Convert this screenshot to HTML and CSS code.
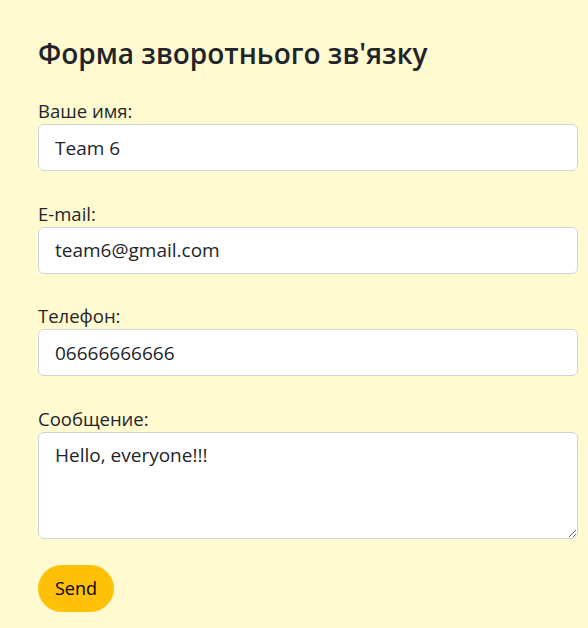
FILE: index.html
```html
<!DOCTYPE html>
<html lang="uk">
<head>
<meta charset="utf-8">
<title>Форма зворотнього зв'язку</title>
<link rel="stylesheet" href="styles.css">
</head>
<body>
<main class="page">
  <h3 class="title">Форма зворотнього зв'язку</h3>
  <form class="form">
    <div class="group">
      <label class="label" for="name">Ваше имя:</label>
      <input class="control" id="name" type="text" value="Team 6">
    </div>
    <div class="group">
      <label class="label" for="email">E-mail:</label>
      <input class="control" id="email" type="email" value="team6@gmail.com">
    </div>
    <div class="group">
      <label class="label" for="phone">Телефон:</label>
      <input class="control" id="phone" type="tel" value="06666666666">
    </div>
    <div class="group">
      <label class="label" for="msg">Сообщение:</label>
      <textarea class="control area" id="msg">Hello, everyone!!!</textarea>
    </div>
    <button class="btn" type="button">Send</button>
  </form>
</main>
</body>
</html>
```
FILE: styles.css
```css
* { box-sizing: border-box; }
html, body { margin: 0; padding: 0; }
body {
  background: #fffad0;
  color: #212529;
  font-family: "Open Sans", "Noto Sans", sans-serif;
  font-size: 18px;
  line-height: 1.5;
}
.page {
  padding: 36px 10px 20px 38px;
}
.title {
  margin: 0 0 27px;
  font-size: 28px;
  font-weight: 600;
  line-height: 34px;
}
.form { display: flex; flex-direction: column; }
.group { display: flex; flex-direction: column; margin-bottom: 28.5px; }
.label { display: block; font-size: 18.5px; line-height: 27px; }
.control {
  display: block;
  width: 100%;
  height: 47px;
  padding: 8px 16px;
  font-family: inherit;
  font-size: 19px;
  line-height: 29px;
  color: #212529;
  background: #fff;
  border: 1px solid #ced4da;
  border-radius: 6px;
  outline: none;
}
.area {
  height: 107px;
  padding-top: 8px;
  resize: vertical;
}
.btn {
  align-self: flex-start;
  height: 47px;
  padding: 0 16px;
  font-family: inherit;
  font-size: 18px;
  color: #000;
  background: #ffc107;
  border: 1px solid #ffc107;
  border-radius: 24px;
  margin-top: -2.5px;
}
```
